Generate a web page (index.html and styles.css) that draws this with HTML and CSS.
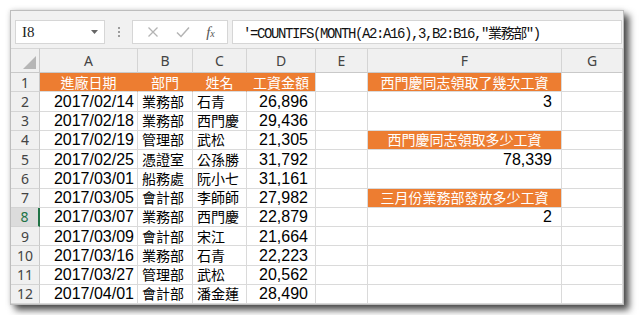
FILE: index.html
```html
<!DOCTYPE html>
<html lang="zh-Hant">
<head>
    <meta charset="UTF-8">
    <title>COUNTIFS - 工資表</title>
    <link rel="stylesheet" href="styles.css">
</head>
<body>
    <div class="window">
        <div class="toolbar">
            <div class="namebox">
                <span>I8</span>
                <svg class="drop" width="7" height="4" viewBox="0 0 7 4"><path d="M0 0H7L3.5 4Z" fill="#666"/></svg>
            </div>
            <div class="grip"><i></i><i></i><i></i></div>
            <div class="buttons">
                <svg width="12" height="12" viewBox="0 0 12 12"><path d="M1.5 1.5L10.5 10.5M10.5 1.5L1.5 10.5" stroke="#b4b4b4" stroke-width="1.3" fill="none"/></svg>
                <svg width="14" height="12" viewBox="0 0 14 12"><path d="M1 6.5L5 10.5L13 1.5" stroke="#b4b4b4" stroke-width="1.5" fill="none"/></svg>
                <span class="fx">f<small>x</small></span>
            </div>
            <div class="formula">'=COUNTIFS(MONTH(A2:A16),3,B2:B16,"業務部")</div>
        </div>

        <div class="sheet">
            <!-- 欄標題 -->
            <div class="corner"><svg width="13" height="13" viewBox="0 0 13 13"><path d="M13 0V13H0Z" fill="#b6b6b6"/></svg></div>
            <div class="hd">A</div>
            <div class="hd">B</div>
            <div class="hd">C</div>
            <div class="hd">D</div>
            <div class="hd">E</div>
            <div class="hd">F</div>
            <div class="hd">G</div>

            <div class="rh">1</div>
            <div class="c org join">進廠日期</div>
            <div class="c org join">部門</div>
            <div class="c org join">姓名</div>
            <div class="c org">工資金額</div>
            <div class="c"></div>
            <div class="c org">西門慶同志領取了幾次工資</div>
            <div class="c"></div>

            <div class="rh">2</div>
            <div class="c num">2017/02/14</div>
            <div class="c txt">業務部</div>
            <div class="c txt">石青</div>
            <div class="c num money">26,896</div>
            <div class="c"></div>
            <div class="c num result">3</div>
            <div class="c"></div>

            <div class="rh">3</div>
            <div class="c num">2017/02/18</div>
            <div class="c txt">業務部</div>
            <div class="c txt">西門慶</div>
            <div class="c num money">29,436</div>
            <div class="c"></div>
            <div class="c"></div>
            <div class="c"></div>

            <div class="rh">4</div>
            <div class="c num">2017/02/19</div>
            <div class="c txt">管理部</div>
            <div class="c txt">武松</div>
            <div class="c num money">21,305</div>
            <div class="c"></div>
            <div class="c org">西門慶同志領取多少工資</div>
            <div class="c"></div>

            <div class="rh">5</div>
            <div class="c num">2017/02/25</div>
            <div class="c txt">憑證室</div>
            <div class="c txt">公孫勝</div>
            <div class="c num money">31,792</div>
            <div class="c"></div>
            <div class="c num result">78,339</div>
            <div class="c"></div>

            <div class="rh">6</div>
            <div class="c num">2017/03/01</div>
            <div class="c txt">船務處</div>
            <div class="c txt">阮小七</div>
            <div class="c num money">31,161</div>
            <div class="c"></div>
            <div class="c"></div>
            <div class="c"></div>

            <div class="rh">7</div>
            <div class="c num">2017/03/05</div>
            <div class="c txt">會計部</div>
            <div class="c txt">李師師</div>
            <div class="c num money">27,982</div>
            <div class="c"></div>
            <div class="c org">三月份業務部發放多少工資</div>
            <div class="c"></div>

            <div class="rh sel">8</div>
            <div class="c num">2017/03/07</div>
            <div class="c txt">業務部</div>
            <div class="c txt">西門慶</div>
            <div class="c num money">22,879</div>
            <div class="c"></div>
            <div class="c num result">2</div>
            <div class="c"></div>

            <div class="rh">9</div>
            <div class="c num">2017/03/09</div>
            <div class="c txt">會計部</div>
            <div class="c txt">宋江</div>
            <div class="c num money">21,664</div>
            <div class="c"></div>
            <div class="c"></div>
            <div class="c"></div>

            <div class="rh">10</div>
            <div class="c num">2017/03/16</div>
            <div class="c txt">業務部</div>
            <div class="c txt">石青</div>
            <div class="c num money">22,223</div>
            <div class="c"></div>
            <div class="c"></div>
            <div class="c"></div>

            <div class="rh">11</div>
            <div class="c num">2017/03/27</div>
            <div class="c txt">管理部</div>
            <div class="c txt">武松</div>
            <div class="c num money">20,562</div>
            <div class="c"></div>
            <div class="c"></div>
            <div class="c"></div>

            <div class="rh">12</div>
            <div class="c num">2017/04/01</div>
            <div class="c txt">會計部</div>
            <div class="c txt">潘金蓮</div>
            <div class="c num money">28,490</div>
            <div class="c"></div>
            <div class="c"></div>
            <div class="c"></div>
        </div>
    </div>
</body>
</html>
```

FILE: styles.css
```css
* {
    box-sizing: border-box;
}
body {
    margin: 0;
    padding: 10px;
    background: #fff;
    font-family: "Noto Sans", "Noto Sans CJK TC", sans-serif;
}
.window {
    width: 614px;
    height: 295px;
    border: 1px solid #bdbdbd;
    background: #fff;
    overflow: hidden;
    box-shadow: 5px 5px 7px rgba(0,0,0,0.7), 0 0 5px rgba(0,0,0,0.15);
}

/* 公式列 */
.toolbar {
    height: 37px;
    background: #f1f1f1;
    display: flex;
    align-items: flex-start;
    padding: 9px 1px 0 4px;
}
.namebox {
    width: 90px;
    height: 24px;
    background: #fff;
    border: 1px solid #d6d6d6;
    display: flex;
    align-items: center;
    justify-content: space-between;
    padding: 0 6px 0 6px;
    font-family: "Liberation Serif", "Noto Sans CJK TC", serif;
    font-size: 15px;
    color: #222;
}
.grip {
    width: 27px;
    height: 24px;
    display: flex;
    flex-direction: column;
    align-items: center;
    justify-content: center;
    gap: 2px;
}
.grip i {
    width: 2px;
    height: 2px;
    background: #9c9c9c;
}
.buttons {
    width: 96px;
    height: 24px;
    background: #fff;
    border: 1px solid #d6d6d6;
    display: flex;
    align-items: center;
    justify-content: space-around;
    padding: 0 4px 0 6px;
}
.fx {
    font-family: "Liberation Serif", serif;
    font-style: italic;
    font-size: 15px;
    color: #555;
}
.fx small {
    font-size: 10px;
}
.formula {
    flex: 1;
    height: 24px;
    margin-left: 4px;
    background: #fff;
    border: 1px solid #d6d6d6;
    padding: 0 10px;
    display: flex;
    align-items: center;
    font-family: "Liberation Mono", "Noto Sans CJK TC", monospace;
    font-size: 14px;
    letter-spacing: -1.4px;
    color: #111;
    white-space: nowrap;
}

/* 工作表 */
.sheet {
    display: grid;
    grid-template-columns: 29px 98px 55px 54px 69px 52px 194px 61px;
    grid-template-rows: 25px repeat(12, 19.25px);
}
.corner, .hd, .rh {
    background: #f0f0f0;
    color: #444;
    font-size: 14px;
    display: flex;
    align-items: center;
    justify-content: center;
}
.corner {
    align-items: flex-end;
    justify-content: flex-end;
    padding: 0 3px 3px 0;
    border-right: 1px solid #c9c9c9;
    border-bottom: 1px solid #c9c9c9;
    border-top: 1px solid #d6d6d6;
}
.hd {
    border-right: 1px solid #d4d4d4;
    border-bottom: 1px solid #c9c9c9;
    border-top: 1px solid #d6d6d6;
}
.rh {
    border-right: 1px solid #c9c9c9;
    border-bottom: 1px solid #d4d4d4;
    padding-top: 1px;
    line-height: 16px;
}
.rh.sel {
    background: #dcdcdc;
    color: #217346;
    border-right: 2px solid #217346;
}
.c {
    border-right: 1px solid #dadada;
    border-bottom: 1px solid #dadada;
    display: flex;
    align-items: center;
    padding: 1px 4px 0;
    white-space: nowrap;
    overflow: hidden;
    color: #000;
    font-size: 14px;
    line-height: 16px;
}
.num {
    justify-content: flex-end;
    padding-right: 3px;
    font-family: "Liberation Sans", sans-serif;
    font-size: 16px;
}
.money {
    padding-right: 7px;
}
.result {
    padding-right: 9px;
}
.org {
    background: #ed7d31;
    color: #fff;
    justify-content: center;
}
.org.join {
    border-right-color: #ed7d31;
}
```
